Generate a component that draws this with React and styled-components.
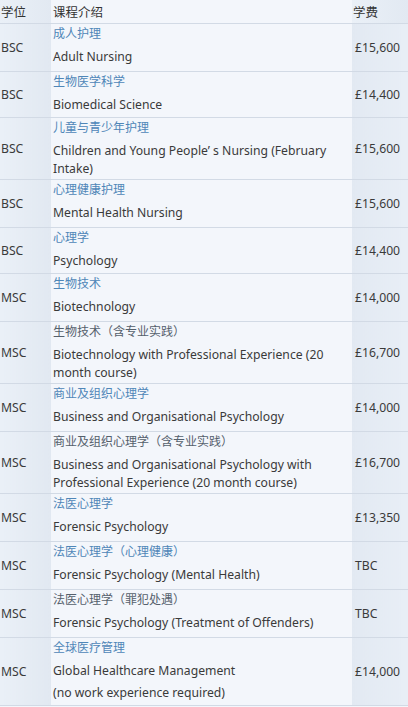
import React from 'react';
import styled, { createGlobalStyle } from 'styled-components';

const GlobalStyle = createGlobalStyle`
	html, body {
		margin: 0;
		padding: 0;
		background: #f3f6fb;
	}
	body {
		font-family: "Noto Sans", "Noto Sans CJK SC", sans-serif;
		color: #3a3a3a;
	}
`;

const courses = [
	{ degree: 'BSC', cn: '成人护理', en: ['Adult Nursing'], fee: '£15,600', h: 48 },
	{ degree: 'BSC', cn: '生物医学科学', en: ['Biomedical Science'], fee: '£14,400', h: 46 },
	{ degree: 'BSC', cn: '儿童与青少年护理', en: ['Children and Young People’ s Nursing (February Intake)'], fee: '£15,600', h: 62 },
	{ degree: 'BSC', cn: '心理健康护理', en: ['Mental Health Nursing'], fee: '£15,600', h: 48 },
	{ degree: 'BSC', cn: '心理学', en: ['Psychology'], fee: '£14,400', h: 46 },
	{ degree: 'MSC', cn: '生物技术', en: ['Biotechnology'], fee: '£14,000', h: 48 },
	{ degree: 'MSC', cn: '生物技术（含专业实践）', en: ['Biotechnology with Professional Experience (20 month course)'], fee: '£16,700', h: 62, dark: true },
	{ degree: 'MSC', cn: '商业及组织心理学', en: ['Business and Organisational Psychology'], fee: '£14,000', h: 48 },
	{ degree: 'MSC', cn: '商业及组织心理学（含专业实践）', en: ['Business and Organisational Psychology with Professional Experience (20 month course)'], fee: '£16,700', h: 62, dark: true },
	{ degree: 'MSC', cn: '法医心理学', en: ['Forensic Psychology'], fee: '£13,350', h: 48 },
	{ degree: 'MSC', cn: '法医心理学（心理健康）', en: ['Forensic Psychology (Mental Health)'], fee: 'TBC', h: 48 },
	{ degree: 'MSC', cn: '法医心理学（罪犯处遇）', en: ['Forensic Psychology (Treatment of Offenders)'], fee: 'TBC', h: 48, dark: true },
	{ degree: 'MSC', cn: '全球医疗管理', en: ['Global Healthcare Management', '(no work experience required)'], fee: '£14,000', h: 68 },
];

const App = () => {
	return (
		<>
			<GlobalStyle />
			<Table>
				<colgroup>
					<col style={{ width: 51 }} />
					<col style={{ width: 301 }} />
					<col style={{ width: 56 }} />
				</colgroup>
				<thead>
					<tr>
						<HeadCell $side>学位</HeadCell>
						<HeadCell>课程介绍</HeadCell>
						<HeadCell $side>学费</HeadCell>
					</tr>
				</thead>
				<tbody>
					{courses.map((c, i) => (
						<Row key={i} $h={c.h}>
							<SideCell>{c.degree}</SideCell>
							<CourseCell>
								<CnTitle $dark={c.dark}>{c.cn}</CnTitle>
								{c.en.map((line, j) => (
									<EnTitle key={j}>{line}</EnTitle>
								))}
							</CourseCell>
							<SideCell $fee>{c.fee}</SideCell>
						</Row>
					))}
				</tbody>
			</Table>
		</>
	);
};

export default App;

const Table = styled.table`
	width: 408px;
	border-collapse: collapse;
	table-layout: fixed;
	font-size: 12.2px;
`;

const HeadCell = styled.th`
	height: 23px;
	padding: 0 0 0 ${(p) => (p.$side ? '1px' : '2px')};
	font-weight: normal;
	font-size: 12.5px;
	text-align: left;
	vertical-align: middle;
	color: #333;
	border-bottom: 1px solid #d2dae5;
	background: ${(p) => (p.$side ? 'linear-gradient(90deg, #eaf0f7, #e2e9f2)' : '#f3f6fb')};
`;

const Row = styled.tr`
	height: ${(p) => p.$h}px;
	border-bottom: 1px solid #d2dae5;
`;

const SideCell = styled.td`
	padding: 0 0 0 ${(p) => (p.$fee ? '3px' : '1px')};
	vertical-align: middle;
	white-space: nowrap;
	color: #3a3a3a;
	background: ${(p) =>
		p.$fee ? 'linear-gradient(90deg, #e2e9f2, #e8eef6)' : 'linear-gradient(90deg, #eaf0f7, #e1e8f1)'};
`;

const CourseCell = styled.td`
	padding: 0 4px 0 2px;
	vertical-align: top;
	background: #f3f6fb;
`;

const CnTitle = styled.div`
	font-size: 12px;
	line-height: 20px;
	color: ${(p) => (p.$dark ? '#55606c' : '#4f86b8')};
`;

const EnTitle = styled.div`
	margin-top: 4px;
	line-height: 18px;
	color: #3a3a3a;
`;
